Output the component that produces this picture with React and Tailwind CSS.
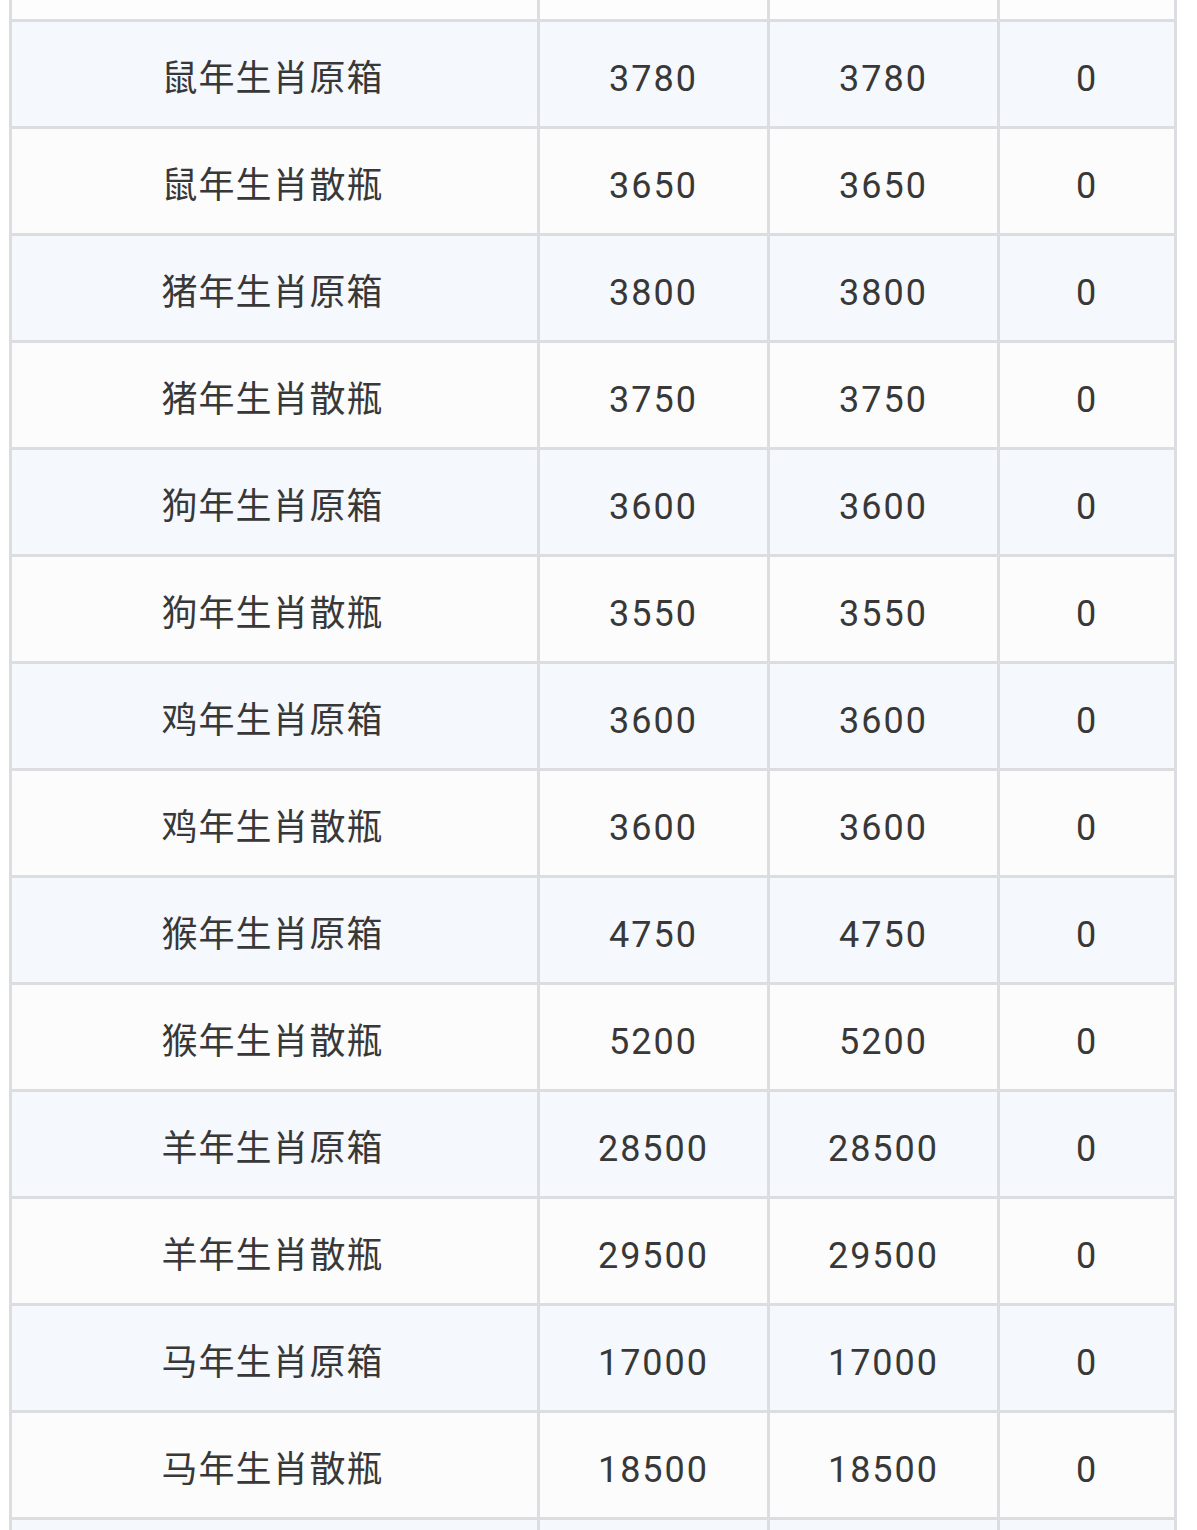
import React from 'react';

const rows = [
    ['鼠年生肖原箱', '3780', '3780', '0'],
    ['鼠年生肖散瓶', '3650', '3650', '0'],
    ['猪年生肖原箱', '3800', '3800', '0'],
    ['猪年生肖散瓶', '3750', '3750', '0'],
    ['狗年生肖原箱', '3600', '3600', '0'],
    ['狗年生肖散瓶', '3550', '3550', '0'],
    ['鸡年生肖原箱', '3600', '3600', '0'],
    ['鸡年生肖散瓶', '3600', '3600', '0'],
    ['猴年生肖原箱', '4750', '4750', '0'],
    ['猴年生肖散瓶', '5200', '5200', '0'],
    ['羊年生肖原箱', '28500', '28500', '0'],
    ['羊年生肖散瓶', '29500', '29500', '0'],
    ['马年生肖原箱', '17000', '17000', '0'],
    ['马年生肖散瓶', '18500', '18500', '0'],
];

export default function App() {
    return (
        <div className="w-[1197px] h-[1530px] overflow-hidden bg-white" style={{ fontFamily: 'Roboto, "Noto Sans CJK SC", sans-serif' }}>
            <div className="ml-[9px] w-[1168px] grid grid-cols-[525px_227px_227px_174px] auto-rows-[104px] gap-[3px] px-[3px] bg-[#dcdde0] text-[36px] text-[#383838]"
                style={{ gridTemplateRows: '19px' }}>
                {/* partial row at the top */}
                <div className="bg-[#fdfdfd]" />
                <div className="bg-[#fdfdfd]" />
                <div className="bg-[#fdfdfd]" />
                <div className="bg-[#fdfdfd]" />

                {rows.map((row, i) => (
                    <React.Fragment key={i}>
                        {row.map((cell, j) => (
                            <div key={j}
                                className={`flex items-center justify-center pt-[9px] ${j === 0 ? 'tracking-[1px] pr-[4px]' : 'tracking-[2px]'} ${i % 2 === 0 ? 'bg-[#f5f8fd]' : 'bg-[#fcfcfd]'}`}>
                                {cell}
                            </div>
                        ))}
                    </React.Fragment>
                ))}

                {/* partial row at the bottom */}
                <div className="bg-[#f5f8fd]" />
                <div className="bg-[#f5f8fd]" />
                <div className="bg-[#f5f8fd]" />
                <div className="bg-[#f5f8fd]" />
            </div>
        </div>
    );
}
